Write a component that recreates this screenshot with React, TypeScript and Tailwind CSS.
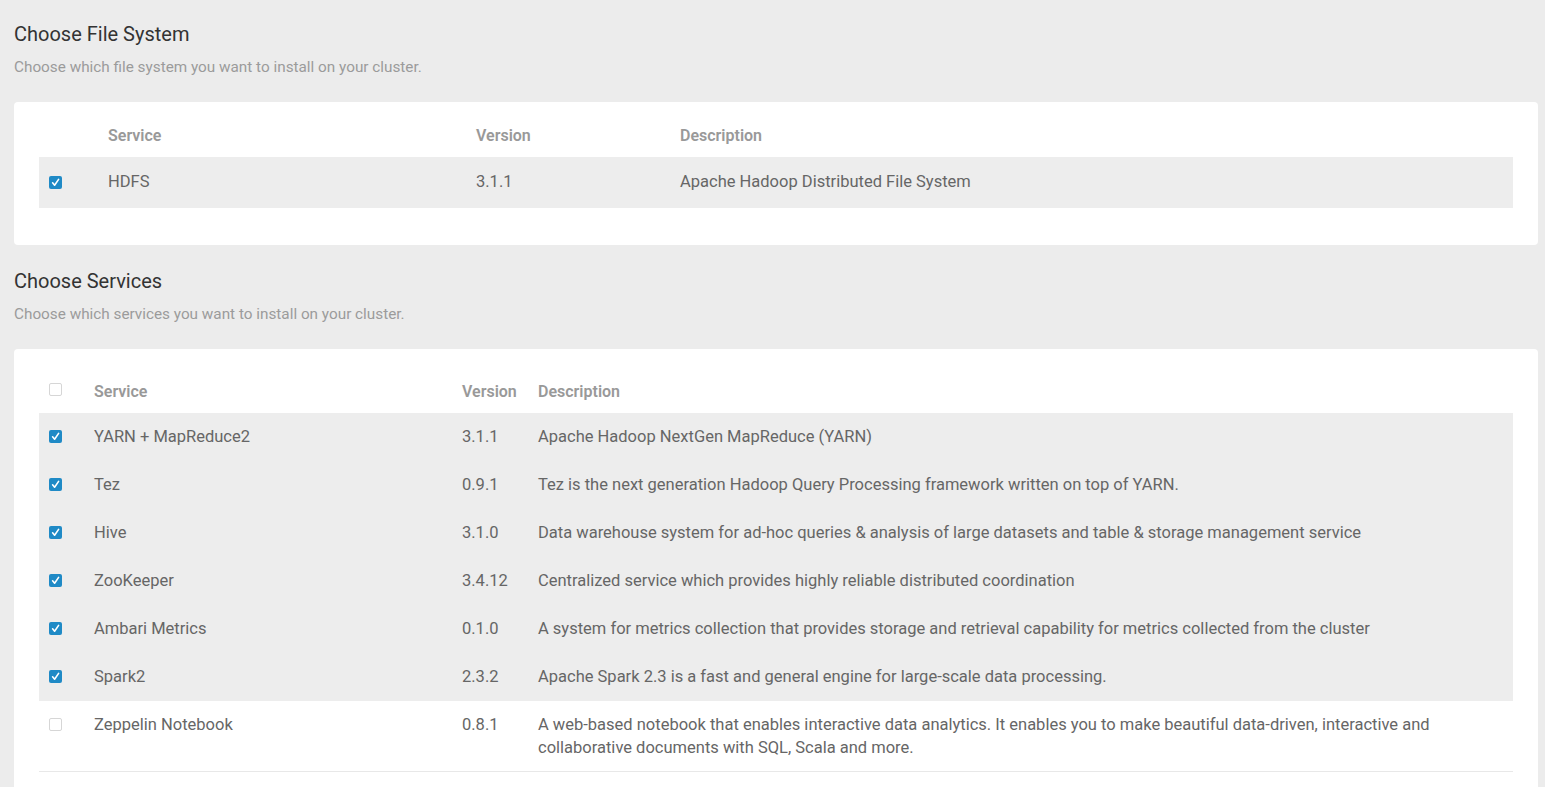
import React from 'react';

interface Service {
  name: string;
  version: string;
  description: string;
  checked: boolean;
}

const services: Service[] = [
  { name: 'YARN + MapReduce2', version: '3.1.1', description: 'Apache Hadoop NextGen MapReduce (YARN)', checked: true },
  { name: 'Tez', version: '0.9.1', description: 'Tez is the next generation Hadoop Query Processing framework written on top of YARN.', checked: true },
  { name: 'Hive', version: '3.1.0', description: 'Data warehouse system for ad-hoc queries & analysis of large datasets and table & storage management service', checked: true },
  { name: 'ZooKeeper', version: '3.4.12', description: 'Centralized service which provides highly reliable distributed coordination', checked: true },
  { name: 'Ambari Metrics', version: '0.1.0', description: 'A system for metrics collection that provides storage and retrieval capability for metrics collected from the cluster', checked: true },
  { name: 'Spark2', version: '2.3.2', description: 'Apache Spark 2.3 is a fast and general engine for large-scale data processing.', checked: true },
  { name: 'Zeppelin Notebook', version: '0.8.1', description: 'A web-based notebook that enables interactive data analytics. It enables you to make beautiful data-driven, interactive and collaborative documents with SQL, Scala and more.', checked: false },
];

function Checkbox({ checked }: { checked: boolean }) {
  if (!checked) {
    return <span className="block w-[13px] h-[13px] rounded-[2px] border border-[#d6d6d6] bg-white" />;
  }
  return (
    <span className="flex items-center justify-center w-[13px] h-[13px] rounded-[2px] bg-[#1f8ac6]">
      <svg width="9" height="9" viewBox="0 0 9 9" fill="none">
        <path d="M1.6 4.8 L3.6 7.2 L7.6 1.4" stroke="white" strokeWidth="1.6" strokeLinecap="round" strokeLinejoin="round" />
      </svg>
    </span>
  );
}

function SectionTitle({ title, subtitle }: { title: string; subtitle: string }) {
  return (
    <div>
      <h2 className="text-[20px] leading-[28px] text-[#333] font-normal">{title}</h2>
      <p className="mt-[9px] text-[15.3px] leading-[20px] text-[#9b9b9b]">{subtitle}</p>
    </div>
  );
}

export default function App() {
  return (
    <div
      className="min-h-screen bg-[#ececec] pl-[14px] pr-[7px] pt-[20px] pb-10"
      style={{ fontFamily: 'Roboto, "Liberation Sans", sans-serif' }}
    >
      <SectionTitle title="Choose File System" subtitle="Choose which file system you want to install on your cluster." />

      <div className="mt-[25px] bg-white rounded-[4px] px-[25px] pb-[37px]">
        <div className="grid grid-cols-[69px_368px_204px_1fr] pt-[24px] pb-[11px] text-[16px] leading-[20px] font-semibold text-[#999]">
          <span />
          <span>Service</span>
          <span>Version</span>
          <span>Description</span>
        </div>
        <div className="grid grid-cols-[69px_368px_204px_1fr] h-[51px] items-center bg-[#ededed] text-[16.5px] text-[#666]">
          <span className="pl-[10px] -mt-[1px]">
            <Checkbox checked />
          </span>
          <span>HDFS</span>
          <span>3.1.1</span>
          <span>Apache Hadoop Distributed File System</span>
        </div>
      </div>

      <div className="mt-[22px]">
        <SectionTitle title="Choose Services" subtitle="Choose which services you want to install on your cluster." />
      </div>

      <div className="mt-[25px] bg-white rounded-[4px] px-[25px] pb-[37px]">
        <div className="grid grid-cols-[55px_368px_76px_1fr] items-center pt-[33px] pb-[11px] text-[16px] leading-[20px] font-semibold text-[#999]">
          <span className="pl-[10px] -mt-[6px]">
            <Checkbox checked={false} />
          </span>
          <span>Service</span>
          <span>Version</span>
          <span>Description</span>
        </div>
        {services.map((s) => (
          <div
            key={s.name}
            className={
              s.checked
                ? 'grid grid-cols-[55px_368px_76px_1fr] h-[48px] items-center bg-[#ededed] text-[16.5px] text-[#666]'
                : 'grid grid-cols-[55px_368px_76px_1fr] py-[12px] items-start border-b border-[#e8e8e8] text-[16.5px] leading-[23px] text-[#666]'
            }
          >
            <span className={s.checked ? 'pl-[10px] -mt-[1px]' : 'pl-[10px] pt-[5px]'}>
              <Checkbox checked={s.checked} />
            </span>
            <span>{s.name}</span>
            <span>{s.version}</span>
            <span className="pr-[60px]">{s.description}</span>
          </div>
        ))}
      </div>
    </div>
  );
}
